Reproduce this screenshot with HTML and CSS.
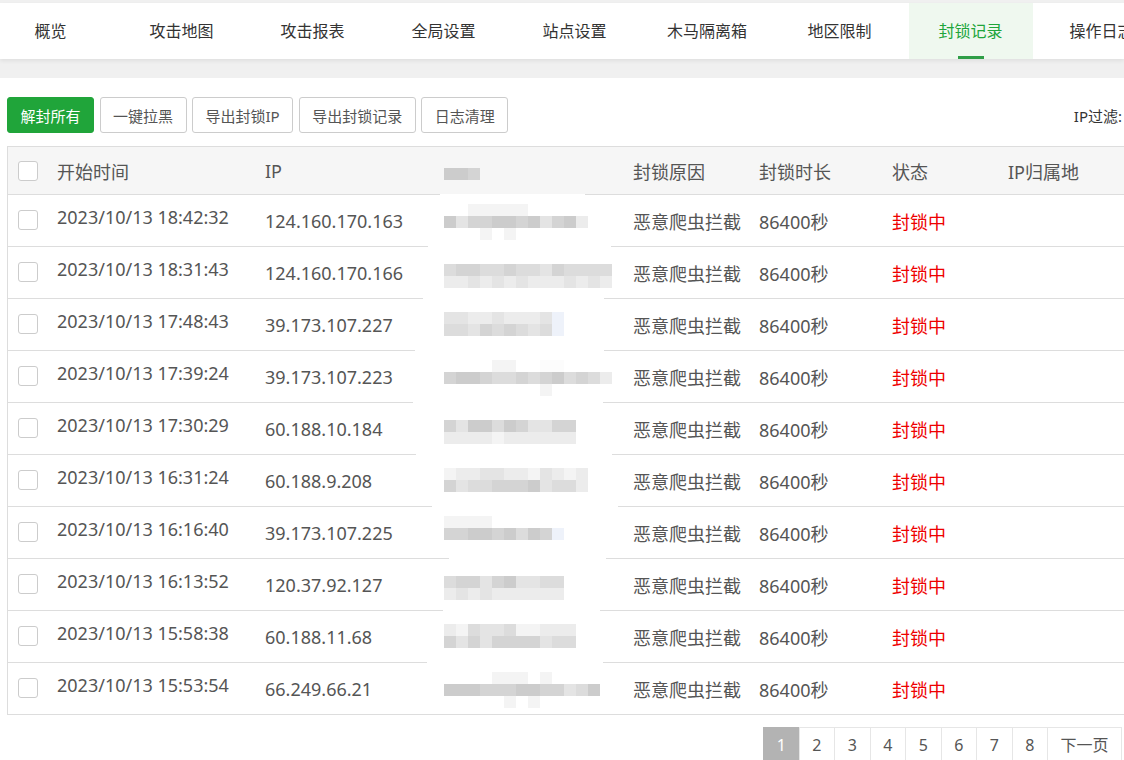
FILE: index.html
```html
<!DOCTYPE html>
<html lang="zh-CN">
<head>
  <meta charset="UTF-8">
  <meta name="viewport" content="width=device-width, initial-scale=1.0">
  <title>封锁记录</title>
  <link rel="stylesheet" href="styles.css">
</head>
<body>
  <div class="topbar">
    <div class="tabs">
      <div class="tab">概览</div>
      <div class="tab">攻击地图</div>
      <div class="tab">攻击报表</div>
      <div class="tab">全局设置</div>
      <div class="tab">站点设置</div>
      <div class="tab wide">木马隔离箱</div>
      <div class="tab">地区限制</div>
      <div class="tab active">封锁记录</div>
      <div class="tab">操作日志</div>
    </div>
  </div>

  <div class="panel">
    <div class="toolbar">
      <button class="btn btn-green">解封所有</button>
      <button class="btn">一键拉黑</button>
      <button class="btn">导出封锁IP</button>
      <button class="btn">导出封锁记录</button>
      <button class="btn">日志清理</button>
      <div class="filter">IP过滤:</div>
    </div>

    <div class="table-wrap">
      <table class="list">
        <colgroup>
          <col style="width:39px">
          <col style="width:208px">
          <col style="width:178px">
          <col style="width:190px">
          <col style="width:126px">
          <col style="width:133px">
          <col style="width:116px">
          <col style="width:200px">
        </colgroup>
        <thead>
          <tr>
            <th><span class="check"></span></th>
            <th>开始时间</th>
            <th>IP</th>
            <th class="site" data-i="0"></th>
            <th>封锁原因</th>
            <th>封锁时长</th>
            <th>状态</th>
            <th>IP归属地</th>
          </tr>
        </thead>
        <tbody id="rows"></tbody>
      </table>
    </div>

    <div class="pager">
      <span class="page current">1</span>
      <span class="page">2</span>
      <span class="page">3</span>
      <span class="page">4</span>
      <span class="page">5</span>
      <span class="page">6</span>
      <span class="page">7</span>
      <span class="page">8</span>
      <span class="page next">下一页</span>
    </div>
  </div>

  <script>
    const records = [
      ['2023/10/13 18:42:32', '124.160.170.163'],
      ['2023/10/13 18:31:43', '124.160.170.166'],
      ['2023/10/13 17:48:43', '39.173.107.227'],
      ['2023/10/13 17:39:24', '39.173.107.223'],
      ['2023/10/13 17:30:29', '60.188.10.184'],
      ['2023/10/13 16:31:24', '60.188.9.208'],
      ['2023/10/13 16:16:40', '39.173.107.225'],
      ['2023/10/13 16:13:52', '120.37.92.127'],
      ['2023/10/13 15:58:38', '60.188.11.68'],
      ['2023/10/13 15:53:54', '66.249.66.21']
    ];

    // blurred site names: [top offset, first block, shades]
    const mosaic = [
      { gap: [440, 585], lines: [[21, 0, '112']] },
      { gap: [428, 611], lines: [[9, 2, '66666'], [21, 0, '142211214215'], [33, 3, '6.6']] },
      { gap: [423, 604], lines: [[17, 0, '32233233423333'], [29, 0, '55454545554545']] },
      { gap: [415, 604], lines: [[13, 0, '445545554b'], [25, 0, '334232343b']] },
      { gap: [413, 603], lines: [[9, 4, '66..77'], [21, 0, '21123323213235'], [33, 8, '6']] },
      { gap: [416, 612], lines: [[17, 0, '24113124422'], [29, 0, '55556555555']] },
      { gap: [432, 618], lines: [[13, 0, '655445564565'], [25, 0, '243322214335']] },
      { gap: [449, 606], lines: [[9, 0, '6666'], [21, 0, '221121312b']] },
      { gap: [443, 600], lines: [[17, 0, '3224214433'], [29, 0, '5454555555']] },
      { gap: [427, 603], lines: [[13, 0, '56344366555'], [25, 0, '24242222433']] },
      { gap: null, lines: [[9, 4, '666.6'], [21, 0, '1112221122431'], [33, 5, '6.6']] }
    ];

    const tbody = document.getElementById('rows');
    records.forEach(function(r, i) {
      const tr = document.createElement('tr');
      tr.innerHTML =
        '<td><span class="check"></span></td>' +
        '<td class="time">' + r[0] + '</td>' +
        '<td>' + r[1] + '</td>' +
        '<td class="site" data-i="' + (i + 1) + '"></td>' +
        '<td>恶意爬虫拦截</td>' +
        '<td>86400秒</td>' +
        '<td class="red">封锁中</td>' +
        '<td></td>';
      tbody.appendChild(tr);
    });

    function shade(c) {
      if (c === 'b') return '#eef2fa';
      const v = (0xc4 + parseInt(c, 10) * 8).toString(16);
      return '#' + v + v + v;
    }

    document.querySelectorAll('.site').forEach(function(cell) {
      const m = mosaic[cell.dataset.i];
      const box = document.createElement('div');
      box.className = 'mosaic';
      m.lines.forEach(function(line) {
        for (let k = 0; k < line[2].length; k++) {
          const c = line[2][k];
          if (c === '.') continue;
          const b = document.createElement('i');
          b.style.top = line[0] + 'px';
          b.style.left = (line[1] + k) * 12 + 'px';
          b.style.background = shade(c);
          box.appendChild(b);
        }
      });
      cell.appendChild(box);
      if (m.gap) {
        const g = document.createElement('span');
        g.className = 'gap';
        g.style.left = (m.gap[0] - 433) + 'px';
        g.style.width = (m.gap[1] - m.gap[0]) + 'px';
        cell.appendChild(g);
      }
    });
  </script>
</body>
</html>
```

FILE: styles.css
```css
html, body {
  overflow: hidden;
}

body {
  margin: 0;
  background: #f0f0f0;
  font-family: "Noto Sans", "Noto Sans CJK SC", sans-serif;
  color: #555;
}

.topbar {
  margin-top: 3px;
  height: 56px;
  background: #fff;
  box-shadow: 0 2px 4px rgba(0, 0, 0, 0.07);
  position: relative;
}

.tabs {
  display: flex;
  margin-left: -15px;
}

.tab {
  flex: 0 0 124px;
  margin: 0 3.5px;
  height: 56px;
  line-height: 56px;
  text-align: center;
  font-size: 16px;
  color: #333;
  position: relative;
}

.tab.wide {
  flex-basis: 127px;
}

.tab.active {
  background: #eff8ef;
  color: #20a53a;
}

.tab.active::after {
  content: "";
  position: absolute;
  left: 50%;
  bottom: 0;
  width: 26px;
  height: 3px;
  margin-left: -13px;
  background: #2f9e47;
}

.panel {
  margin-top: 19px;
  background: #fff;
  padding: 19px 0 60px 7px;
}

.toolbar {
  display: flex;
  align-items: center;
  height: 36px;
}

.btn {
  height: 36px;
  padding: 0 12.5px;
  margin-right: 5.5px;
  border: 1px solid #ccc;
  border-radius: 3px;
  background: #fff;
  color: #555;
  font-family: inherit;
  font-size: 15px;
}

.btn-green {
  background: #20a53a;
  border-color: #20a53a;
  color: #fff;
}

.filter {
  margin-left: auto;
  margin-right: 2px;
  font-size: 15px;
  color: #333;
}

.table-wrap {
  margin-top: 13px;
  overflow: hidden;
}

.list {
  table-layout: fixed;
  width: 1190px;
  border-collapse: separate;
  border-spacing: 0;
  border-top: 1px solid #ddd;
  border-left: 1px solid #ddd;
  font-size: 18px;
}

.list th,
.list td {
  padding: 0 0 0 10px;
  border-bottom: 1px solid #ddd;
  text-align: left;
  white-space: nowrap;
  vertical-align: middle;
}

.list th {
  height: 47px;
  background: #f6f6f6;
  font-weight: normal;
  color: #555;
}

.list td {
  height: 51px;
}

.list td.time {
  padding-bottom: 8px;
  height: 43px;
}

.check {
  display: block;
  width: 18px;
  height: 18px;
  border: 1px solid #ccc;
  border-radius: 3px;
  background: #fff;
  margin-top: -2px;
}

.list thead .check {
  margin-top: 0;
}

.red {
  color: #e00;
}

.site {
  position: relative;
}

.mosaic {
  position: absolute;
  left: 11px;
  top: 0;
}

.mosaic i {
  position: absolute;
  width: 12px;
  height: 12px;
}

.gap {
  position: absolute;
  bottom: -1px;
  height: 1px;
  background: #fff;
}

.pager {
  display: flex;
  justify-content: flex-end;
  margin-top: 12px;
  padding-right: 2px;
}

.page {
  width: 34.5px;
  height: 34px;
  line-height: 34px;
  margin-left: -1px;
  border: 1px solid #e6e6e6;
  text-align: center;
  font-size: 16px;
  color: #555;
}

.page.current {
  background: #b3b3b3;
  border-color: #b3b3b3;
  color: #fff;
}

.page.next {
  width: 73px;
}
```
